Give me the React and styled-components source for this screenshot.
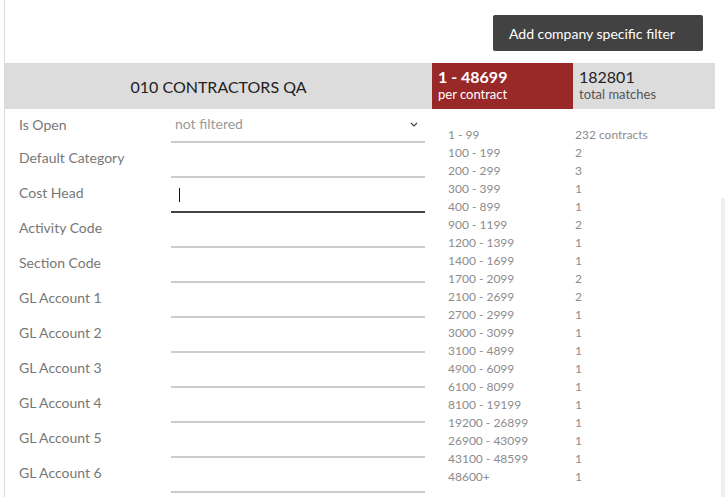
import React from 'react';
import styled, {createGlobalStyle} from 'styled-components';

const GlobalStyle = createGlobalStyle`
  html, body {
    margin: 0;
    padding: 0;
    background: #fff;
    font-family: Lato, "Open Sans", sans-serif;
  }
`;

const Page = styled.div`
  display: flex;
  min-height: 497px;
`;

const Panel = styled.div`
  margin-left: 4px;
  width: 710px;
  border-left: 1px solid #dadada;
  display: flex;
  flex-direction: column;
`;

const ScrollTrack = styled.div`
  width: 4px;
  margin-left: 6px;
  margin-top: 198px;
  background: #efefef;
`;

const TopBar = styled.div`
  height: 63px;
  display: flex;
  justify-content: flex-end;
  align-items: flex-start;
  padding-right: 12px;
  box-sizing: border-box;
`;

const FilterButton = styled.button`
  margin-top: 15px;
  width: 210px;
  height: 36px;
  padding: 0 0 0 16px;
  text-align: left;
  border: none;
  border-radius: 2px;
  background: #424242;
  color: #fff;
  font-family: Lato, sans-serif;
  font-size: 14px;
  cursor: pointer;
`;

const Header = styled.div`
  display: flex;
  height: 46px;
  background: #dcdcdc;
`;

const Title = styled.div`
  width: 427px;
  display: flex;
  align-items: center;
  justify-content: center;
  font-size: 16px;
  color: #222;
`;

const StatBox = styled.div`
  width: ${p => p.width}px;
  padding: 4px 6px 0 6px;
  box-sizing: border-box;
  background: ${p => (p.highlight ? '#992828' : 'transparent')};
  color: ${p => (p.highlight ? '#fff' : '#222')};
`;

const StatValue = styled.div`
  font-size: 16px;
  line-height: 19px;
  font-weight: ${p => (p.bold ? 700 : 400)};
`;

const StatCaption = styled.div`
  font-size: 13px;
  line-height: 17px;
  color: ${p => (p.light ? '#fff' : '#555')};
`;

const Body = styled.div`
  display: flex;
`;

const Form = styled.div`
  width: 427px;
  padding-left: 14px;
  box-sizing: border-box;
`;

const Row = styled.div`
  display: flex;
  height: ${p => (p.first ? 34 : 35)}px;
`;

const Label = styled.div`
  width: 152px;
  padding-top: ${p => (p.first ? 6 : 5)}px;
  font-size: 14px;
  line-height: 20px;
  color: #777;
`;

const Field = styled.div`
  width: 254px;
  box-sizing: border-box;
  border-bottom: 2px solid ${p => (p.active ? '#444' : '#cccccc')};
  display: flex;
  align-items: flex-start;
  justify-content: space-between;
  padding: ${p => (p.active ? '10px' : '5px')} 7px 0 4px;
`;

const Placeholder = styled.span`
  font-size: 14px;
  line-height: 20px;
  color: #9a9a9a;
`;

const Caret = styled.span`
  display: block;
  width: 1px;
  height: 14px;
  margin-left: 4px;
  background: #111;
`;

const Chevron = styled.svg`
  margin-top: 8px;
`;

const Ranges = styled.div`
  padding: 17px 0 0 16px;
`;

const RangeRow = styled.div`
  display: flex;
  font-size: 12px;
  line-height: 18px;
  color: #8c8c8c;
`;

const RangeLabel = styled.span`
  width: 127px;
`;

const fields = [
  'Default Category',
  'Cost Head',
  'Activity Code',
  'Section Code',
  'GL Account 1',
  'GL Account 2',
  'GL Account 3',
  'GL Account 4',
  'GL Account 5',
  'GL Account 6'
];

const ranges = [
  ['1 - 99', '232 contracts'],
  ['100 - 199', '2'],
  ['200 - 299', '3'],
  ['300 - 399', '1'],
  ['400 - 899', '1'],
  ['900 - 1199', '2'],
  ['1200 - 1399', '1'],
  ['1400 - 1699', '1'],
  ['1700 - 2099', '2'],
  ['2100 - 2699', '2'],
  ['2700 - 2999', '1'],
  ['3000 - 3099', '1'],
  ['3100 - 4899', '1'],
  ['4900 - 6099', '1'],
  ['6100 - 8099', '1'],
  ['8100 - 19199', '1'],
  ['19200 - 26899', '1'],
  ['26900 - 43099', '1'],
  ['43100 - 48599', '1'],
  ['48600+', '1']
];

const App = () => (
  <Page>
    <GlobalStyle />
    <Panel>
      <TopBar>
        <FilterButton>Add company specific filter</FilterButton>
      </TopBar>

      <Header>
        <Title>010 CONTRACTORS QA</Title>
        <StatBox highlight width={141}>
          <StatValue bold>1 - 48699</StatValue>
          <StatCaption light>per contract</StatCaption>
        </StatBox>
        <StatBox width={142}>
          <StatValue>182801</StatValue>
          <StatCaption>total matches</StatCaption>
        </StatBox>
      </Header>

      <Body>
        <Form>
          <Row first>
            <Label first>Is Open</Label>
            <Field>
              <Placeholder>not filtered</Placeholder>
              <Chevron width="8" height="5" viewBox="0 0 8 5">
                <path d="M1 1l3 3 3-3" fill="none" stroke="#444" strokeWidth="1.2" />
              </Chevron>
            </Field>
          </Row>
          {fields.map(name => (
            <Row key={name}>
              <Label>{name}</Label>
              <Field active={name === 'Cost Head'}>
                {name === 'Cost Head' && <Caret />}
              </Field>
            </Row>
          ))}
        </Form>

        <Ranges>
          {ranges.map(([range, count]) => (
            <RangeRow key={range}>
              <RangeLabel>{range}</RangeLabel>
              <span>{count}</span>
            </RangeRow>
          ))}
        </Ranges>
      </Body>
    </Panel>
    <ScrollTrack />
  </Page>
);

export default App;
